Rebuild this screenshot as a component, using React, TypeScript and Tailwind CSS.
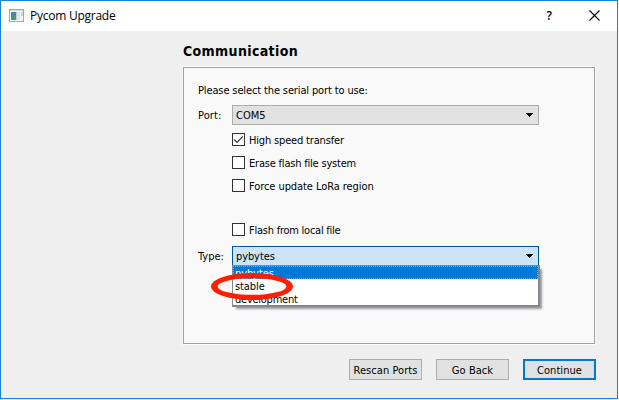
import type { ReactNode } from "react";

const uiFont = "font-['DejaVu_Sans_Condensed','DejaVu_Sans',sans-serif] [font-stretch:condensed]";

function Arrow() {
  return (
    <svg className="mr-[5px] ml-auto" width="7" height="4" viewBox="0 0 7 4" shapeRendering="crispEdges">
      <path d="M0 0h7v1H0zM1 1h5v1H1zM2 2h3v1H2zM3 3h1v1H3z" fill="#000" />
    </svg>
  );
}

function Check({ label, checked, spacing }: { label: string; checked?: boolean; spacing: string }) {
  return (
    <div className="flex h-[13px] items-center">
      <span className="block size-[13px] shrink-0 border border-[#333] bg-white">
        {checked && (
          <svg className="block" width="11" height="11" viewBox="0 0 11 11">
            <path d="M1.2 5.5 4 8.3 9.8 2.3" fill="none" stroke="#333" strokeWidth="1.2" />
          </svg>
        )}
      </span>
      <span className={`ml-1 pt-[2px] ${spacing}`}>{label}</span>
    </div>
  );
}

function Button({ children, primary }: { children: ReactNode; primary?: boolean }) {
  return (
    <button
      className={`flex h-[21px] w-[73px] shrink-0 items-center justify-center bg-[#e1e1e1] pt-px tracking-[0.06px] ${
        primary ? "border-2 border-[#0078d7]" : "border border-[#adadad]"
      }`}
    >
      {children}
    </button>
  );
}

export default function App() {
  return (
    <div className="h-[400px] w-[619px] overflow-hidden bg-white">
      <div className={`flex h-[399px] w-[618px] flex-col border border-[#1883d7] bg-[#efefef] text-[11px] leading-[13px] whitespace-nowrap text-black ${uiFont}`}>
        <header className="flex h-[30px] shrink-0 items-center bg-white pr-[17px] pb-px pl-2 font-['Open_Sans','Noto_Sans',sans-serif] text-[12px] [font-stretch:normal]">
          <svg width="15" height="13" viewBox="0 0 15 13" shapeRendering="crispEdges">
            <path d="M0 0h15v13H0z" fill="#a5a9ad" />
            <path d="M1 1h13v1H1z" fill="#d7dadd" />
            <path d="M1 2h13v10H1z" fill="#f3f5f7" />
            <path d="M2 3h5v8H2z" fill="#4b8a9c" />
            <path d="M2 7h5v4H2z" fill="#509477" />
            <path d="M7 3h1v8H7z" fill="#b8cfd5" />
            <path d="M8 3h3v8H8z" fill="#e2e4ea" />
            <path d="M12 3h2v4h-2z" fill="#b9d9c9" />
          </svg>
          <span className="ml-[6px] leading-4 tracking-[-0.25px]">Pycom Upgrade</span>
          <span className="ml-auto leading-4 font-semibold">?</span>
          <svg className="ml-[37px]" width="11" height="11" viewBox="0 0 11 11">
            <path d="M.5.5l10 10M10.5.5l-10 10" stroke="#000" strokeWidth="1.1" />
          </svg>
        </header>

        <main className="flex flex-col pl-[182px]">
          <h1 className="mt-[11px] h-[18px] text-[14px] leading-[18px] font-bold tracking-[0.36px]">Communication</h1>
          <section className="mt-[7px] flex h-[277px] w-[412px] flex-col border border-[#a0a0a0] bg-[#f9f9f9] pl-[14px] outline outline-[#f9f9f9]">
            <p className="mt-4 tracking-[-0.13px]">Please select the serial port to use:</p>
            <div className="mt-2 flex h-5 items-center">
              <span className="w-[34px] tracking-[0.1px]">Port:</span>
              <div className="flex h-5 w-[307px] items-center border border-[#adadad] bg-[#e1e1e1] pl-[3px]">
                COM5
                <Arrow />
              </div>
            </div>
            <div className="mt-2 ml-[34px] flex flex-col gap-[10px]">
              <Check label="High speed transfer" checked spacing="tracking-[-0.17px]" />
              <Check label="Erase flash file system" spacing="tracking-[-0.2px]" />
              <Check label="Force update LoRa region" spacing="tracking-[-0.07px]" />
            </div>
            <div className="mt-[31px] ml-[34px]">
              <Check label="Flash from local file" spacing="tracking-[-0.24px]" />
            </div>
            <div className="mt-[10px] flex h-5 items-center">
              <span className="w-[34px]">Type:</span>
              <div className="relative flex h-5 w-[307px] items-center border border-[#005499] bg-[#cce4f7] pl-[3px] tracking-[-0.1px]">
                pybytes
                <Arrow />
                <div className="absolute top-[18px] -left-px h-[42px] w-[308px] border border-r-2 border-b-2 border-[#828790] bg-white shadow-[3px_3px_2px_-1px_#999]">
                  <div className="relative h-[13px] overflow-hidden bg-[#0078d7] pl-[2px] leading-[15px] text-white">
                    pybytes
                    <svg className="absolute inset-0" width="305" height="13" shapeRendering="crispEdges">
                      <path d="M0 .5h305M0 12.500h305M.5 0v13M304.500 0v13" fill="none" stroke="#ff8728" strokeDasharray="1 1" />
                    </svg>
                  </div>
                  <div className="h-[13px] pl-[2px] leading-[15px]">stable</div>
                  <div className="h-[13px] pl-[2px] leading-[15px] tracking-[-0.25px]">development</div>
                  <svg className="absolute top-[7px] -left-[22px]" width="82" height="28" viewBox="0 0 82 28">
                    <path
                      fillRule="evenodd"
                      fill="#ff1e00"
                      d="M0 13.500a41 13.500 0 1 0 82 0a41 13.500 0 1 0-82 0zM6.500 13.500a34.500 8.300 0 1 1 69 0a34.500 8.300 0 1 1-69 0z"
                    />
                  </svg>
                </div>
              </div>
            </div>
          </section>
          <footer className="mt-[15px] ml-[166px] flex gap-[14px]">
            <Button>Rescan Ports</Button>
            <Button>Go Back</Button>
            <Button primary>Continue</Button>
          </footer>
        </main>
      </div>
    </div>
  );
}
